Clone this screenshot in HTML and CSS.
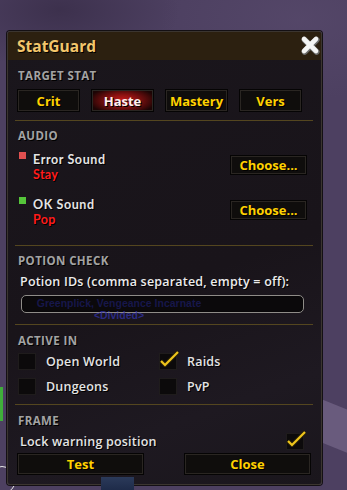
FILE: index.html
```html
<!DOCTYPE html>
<html lang="en">

<head>
    <meta charset="UTF-8">
    <title>StatGuard</title>
    <link rel="stylesheet" href="styles.css">
</head>

<body>
    <div class="world">
        <span class="world-band"></span>
        <span class="world-sliver"></span>
        <span class="world-ring"></span>
        <span class="world-icon"></span>

        <section class="frame">
            <header class="titlebar">
                <h1>StatGuard</h1>
                <button class="close-x" aria-label="Close">
                    <svg width="20" height="20" viewBox="0 0 20 20">
                        <path d="M4 4 L16 16 M16 4 L4 16" stroke="#6b6b6b" stroke-width="6" stroke-linecap="round" transform="translate(0.6 0.8)"/>
                        <path d="M4 4 L16 16 M16 4 L4 16" stroke="#f4f4f4" stroke-width="4.6" stroke-linecap="round"/>
                    </svg>
                </button>
            </header>

            <div class="group group-stat">
                <h2>TARGET STAT</h2>
                <div class="stat-row">
                    <button class="btn">Crit</button>
                    <button class="btn active">Haste</button>
                    <button class="btn">Mastery</button>
                    <button class="btn">Vers</button>
                </div>
            </div>

            <div class="group group-audio">
                <h2>AUDIO</h2>
                <div class="sound-row">
                    <span class="swatch red"></span>
                    <div class="sound-text">
                        <div class="sound-name">Error Sound</div>
                        <div class="sound-value">Stay</div>
                    </div>
                    <button class="btn choose">Choose...</button>
                </div>
                <div class="sound-row">
                    <span class="swatch green"></span>
                    <div class="sound-text">
                        <div class="sound-name">OK Sound</div>
                        <div class="sound-value">Pop</div>
                    </div>
                    <button class="btn choose">Choose...</button>
                </div>
            </div>

            <div class="group group-potion">
                <h2>POTION CHECK</h2>
                <div class="field-label">Potion IDs (comma separated, empty = off):</div>
                <div class="field-box"></div>
            </div>

            <div class="group group-active">
                <h2>ACTIVE IN</h2>
                <div class="check-grid">
                    <label class="check"><span class="box"></span>Open World</label>
                    <label class="check"><span class="box on">
                        <svg width="22" height="22" viewBox="0 0 22 22"><polyline points="2,12 6,16 19,3" fill="none" stroke="#2a2208" stroke-width="4" stroke-linejoin="round"/><polyline points="2,12 6,16 19,3" fill="none" stroke="#efc51c" stroke-width="2.2" stroke-linejoin="miter"/></svg>
                    </span>Raids</label>
                    <label class="check"><span class="box"></span>Dungeons</label>
                    <label class="check"><span class="box"></span>PvP</label>
                </div>
            </div>

            <div class="group group-frame">
                <h2>FRAME</h2>
                <div class="lock-row">
                    <span class="lock-text">Lock warning position</span>
                    <span class="box on">
                        <svg width="22" height="22" viewBox="0 0 22 22"><polyline points="2,12 6,16 19,3" fill="none" stroke="#2a2208" stroke-width="4" stroke-linejoin="round"/><polyline points="2,12 6,16 19,3" fill="none" stroke="#efc51c" stroke-width="2.2" stroke-linejoin="miter"/></svg>
                    </span>
                </div>
                <div class="bottom-row">
                    <button class="btn wide">Test</button>
                    <button class="btn wide">Close</button>
                </div>
            </div>
        </section>

        <div class="nameplate">
            <span class="np-name">Greenplick, Vengeance Incarnate</span>
            <span class="np-guild">&lt;Divided&gt;</span>
        </div>
    </div>
</body>

</html>
```

FILE: styles.css
```css
body {
    margin: 0;
    background-color: #4d4061;
    font-family: "Open Sans", "DejaVu Sans", sans-serif;
    overflow: hidden;
}

.world {
    position: relative;
    width: 347px;
    height: 490px;
    padding: 31px 0 0 7px;
    box-sizing: border-box;
    background:
        radial-gradient(ellipse 120px 60px at 60px 10px, rgba(30, 20, 40, .35), transparent),
        radial-gradient(ellipse 140px 80px at 300px 20px, rgba(100, 85, 120, .3), transparent),
        #4d4061;
    overflow: hidden;
}

.world-band {
    position: absolute;
    left: 150px;
    top: 330px;
    width: 320px;
    height: 40px;
    background: rgba(140, 125, 160, .45);
    transform: rotate(22deg);
    transform-origin: left top;
}

.world-sliver {
    position: absolute;
    left: 0;
    top: 387px;
    width: 3px;
    height: 34px;
    background: #3fae3a;
}

.world-ring {
    position: absolute;
    left: -12px;
    top: 466px;
    width: 26px;
    height: 26px;
    border: 1.5px solid #e8e8e8;
    border-radius: 50%;
}

.world-icon {
    position: absolute;
    left: 101px;
    top: 477px;
    width: 33px;
    height: 14px;
    background: linear-gradient(#2b3a5a, #1d2a48);
    z-index: 2;
}

/* main window */
.frame {
    position: relative;
    z-index: 1;
    width: 315px;
    height: 454px;
    box-sizing: border-box;
    background: linear-gradient(160deg, #1a161c 0%, #19141a 55%, #1e1921 80%, #1a161c 100%);
    border: 1px solid #3b3530;
    border-radius: 3px;
    box-shadow: 0 0 0 1px #141014;
    color: #e6e6e6;
}

.titlebar {
    display: flex;
    justify-content: space-between;
    align-items: center;
    height: 28px;
    padding: 0 1px 0 9px;
    background-color: #2c2010;
    border-radius: 2px 2px 0 0;
}

.titlebar h1 {
    margin: 0;
    font-size: 15.5px;
    font-weight: 700;
    color: #f3c66b;
    text-shadow: 1px 1px 0 #000;
}

.close-x {
    background: none;
    border: 0;
    padding: 0;
    margin-top: -3px;
    width: 20px;
    height: 20px;
}

.group {
    margin: 0 8px 0 7px;
    padding: 0 2px;
    border-bottom: 1px solid #54461f;
}

.group h2 {
    margin: 0;
    font-size: 11.5px;
    line-height: 14px;
    font-weight: 700;
    letter-spacing: .4px;
    color: #a3a3a3;
    padding-left: 1px;
    text-shadow: 1px 1px 0 #000;
}

.btn {
    font-family: "Open Sans", "DejaVu Sans", sans-serif;
    font-size: 13px;
    font-weight: 700;
    color: #ffd100;
    background-color: #0f0d0c;
    border: 1px solid #050404;
    box-shadow: inset 0 0 0 1px #2a2622;
    text-shadow: 1px 1px 0 #000;
    padding: 0;
}

.btn.active {
    color: #fff0f0;
    background: radial-gradient(ellipse 55% 65% at 50% 50%, #c41c1c 0%, #8e1212 40%, #3c0808 85%, #1c0505 100%);
}

/* target stat */
.group-stat {
    padding-top: 9px;
    padding-bottom: 8px;
}

.stat-row {
    display: grid;
    grid-template-columns: repeat(4, 63px);
    column-gap: 11px;
    margin-top: 6px;
}

.stat-row .btn {
    height: 23px;
}

/* audio */
.group-audio {
    padding-top: 8px;
    padding-bottom: 18px;
}

.sound-row {
    display: flex;
    align-items: flex-start;
    padding: 0 4px 0 2px;
    margin-top: 9px;
}

.sound-row + .sound-row {
    margin-top: 15px;
}

.swatch {
    width: 7px;
    height: 7px;
    margin-right: 7px;
}

.swatch.red {
    background-color: #e05050;
}

.swatch.green {
    background-color: #55c53a;
}

.sound-text {
    flex: 1;
    font-family: Lato, "Open Sans", sans-serif;
    font-size: 12.5px;
    line-height: 15px;
    text-shadow: 1px 1px 0 #000;
}

.sound-name {
    font-weight: 700;
    letter-spacing: .6px;
    color: #e4e4e4;
}

.sound-value {
    font-weight: 700;
    letter-spacing: .3px;
    color: #ff1c1c;
}

.choose {
    width: 77px;
    height: 20px;
    margin-top: 3px;
}

/* potion */
.group-potion {
    padding-top: 8px;
    padding-bottom: 11px;
}

.field-label {
    margin-top: 6px;
    padding-left: 3px;
    font-size: 12.5px;
    line-height: 15px;
    font-weight: 600;
    letter-spacing: .2px;
    color: #ececec;
    text-shadow: 1px 1px 0 #000;
}

.field-box {
    margin: 6px 0 0 4px;
    width: 283px;
    height: 18px;
    box-sizing: border-box;
    border: 1px solid #8f8c88;
    border-radius: 5px;
    background-color: #0b090b;
    box-shadow: inset 0 0 2px #000;
}

/* active in */
.group-active {
    padding-top: 9px;
    padding-bottom: 9px;
}

.check-grid {
    display: grid;
    grid-template-columns: 141px 141px;
    row-gap: 8px;
    margin-top: 5px;
    padding-left: 1px;
}

.check {
    display: flex;
    align-items: center;
    gap: 10px;
    height: 17px;
    font-size: 12.5px;
    font-weight: 600;
    letter-spacing: .2px;
    color: #e4e4e4;
    text-shadow: 1px 1px 0 #000;
}

.box {
    position: relative;
    flex: none;
    width: 18px;
    height: 17px;
    box-sizing: border-box;
    background-color: #0c0a0b;
    border: 1px solid #1f1c1c;
}

.box svg {
    position: absolute;
    left: -1px;
    top: -5px;
}

/* frame */
.group-frame {
    border-bottom: 0;
    padding-top: 9px;
}

.lock-row {
    display: flex;
    justify-content: space-between;
    align-items: center;
    height: 17px;
    margin-top: 5px;
    padding: 0 7px 0 3px;
    font-size: 12.5px;
    font-weight: 600;
    letter-spacing: .2px;
    color: #e4e4e4;
    text-shadow: 1px 1px 0 #000;
}

.bottom-row {
    display: flex;
    justify-content: space-between;
    margin-top: 3px;
}

.wide {
    width: 127px;
    height: 22px;
}

/* world text showing through */
.nameplate {
    position: absolute;
    left: 38px;
    top: 297px;
    width: 162px;
    z-index: 2;
    display: flex;
    flex-direction: column;
    align-items: center;
    font-family: "Liberation Sans", Arial, sans-serif;
    font-size: 10.5px;
    line-height: 12px;
    font-weight: 700;
    white-space: nowrap;
}

.np-name {
    color: #17174a;
}

.np-guild {
    color: #3434b0;
    opacity: .7;
}
```
